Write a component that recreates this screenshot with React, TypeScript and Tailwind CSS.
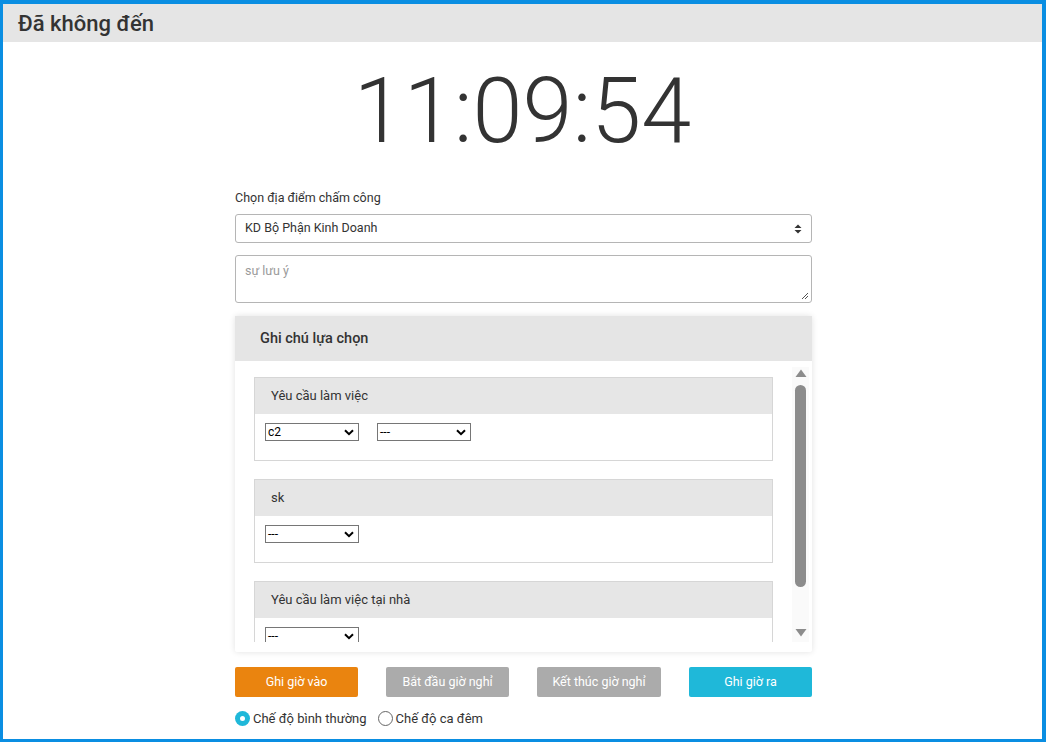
import React from "react";

const font = { fontFamily: "Roboto, 'Noto Sans', sans-serif" };

function Chevron() {
  return (
    <svg width="10" height="7" viewBox="0 0 10 7" className="shrink-0">
      <path d="M1 1.2 L5 5.2 L9 1.2" fill="none" stroke="#000" strokeWidth="2" />
    </svg>
  );
}

function MiniSelect({ value }: { value: string }) {
  return (
    <div className="flex h-[18px] w-[94px] items-center justify-between border border-[#767676] bg-white pl-[2px] pr-[4px] text-[12px] leading-none text-black">
      <span>{value}</span>
      <Chevron />
    </div>
  );
}

function Card({ title, children, cut }: { title: string; children: React.ReactNode; cut?: boolean }) {
  return (
    <div className={`border border-[#d6d6d6] ${cut ? "border-b-0" : ""}`}>
      <div className="flex h-[36px] items-center bg-[#e6e6e6] pl-[16px] text-[13px] text-[#333]">{title}</div>
      <div className={`flex gap-[18px] px-[10px] pt-[9px] ${cut ? "h-[24px]" : "h-[46px]"} overflow-hidden`}>{children}</div>
    </div>
  );
}

export default function App() {
  return (
    <div
      className="h-[742px] w-[1046px] overflow-hidden border-l-[3px] border-t-[4px] border-r-[4px] border-b-[3px] border-[#0a8ee2] bg-white"
      style={font}
    >
      <div className="flex h-[38px] items-center bg-[#e5e5e5] pl-[15px] text-[22px] font-medium text-[#333]">
        Đã không đến
      </div>
      <div className="flex justify-center pt-[27px]">
        <div className="text-[90px] font-light leading-[86px] text-[#333]">11:09:54</div>
      </div>
      <div className="ml-[232px] mt-[35px] w-[577px]">
        <div className="text-[12.5px] leading-[15px] text-[#333]">Chọn địa điểm chấm công</div>
        <div className="mt-[9px] flex h-[29px] items-center justify-between rounded-[3px] border border-[#b5b5b5] px-[9px] text-[12.5px] text-[#333]">
          <span>KD Bộ Phận Kinh Doanh</span>
          <svg width="8" height="10" viewBox="0 0 8 10">
            <path d="M4 0.5 L7.5 4 L0.5 4 Z" fill="#333" />
            <path d="M4 9.5 L7.5 6 L0.5 6 Z" fill="#333" />
          </svg>
        </div>
        <div className="relative mt-[12px] h-[48px] rounded-[3px] border border-[#b5b5b5] px-[9px] pt-[6px] text-[12.5px] text-[#9a9a9a]">
          sự lưu ý
          <svg className="absolute bottom-[2px] right-[2px]" width="9" height="9" viewBox="0 0 9 9">
            <path d="M8 2 L2 8 M8 5 L5 8" stroke="#555" strokeWidth="1" />
          </svg>
        </div>
        <div className="mt-[13px] rounded-[2px] shadow-[0_0_6px_rgba(0,0,0,0.12)]">
          <div className="flex h-[45px] items-center bg-[#e5e5e5] pl-[25px] text-[14.5px] font-medium text-[#333]">
            Ghi chú lựa chọn
          </div>
          <div className="pb-[10px]">
            <div className="flex h-[281px] overflow-hidden pl-[19px] pt-[16px]">
              <div className="flex w-[519px] flex-col gap-[18px]">
                <Card title="Yêu cầu làm việc">
                  <MiniSelect value="c2" />
                  <MiniSelect value="---" />
                </Card>
                <Card title="sk">
                  <MiniSelect value="---" />
                </Card>
                <Card title="Yêu cầu làm việc tại nhà" cut>
                  <MiniSelect value="---" />
                </Card>
              </div>
              <div className="ml-[19px] -mt-[10px] flex w-[17px] flex-col items-center bg-[#fafafa] pt-[2px]">
                <svg width="12" height="9" viewBox="0 0 12 9">
                  <path d="M6 0.5 L11.5 8 L0.5 8 Z" fill="#8c8c8c" />
                </svg>
                <div className="mt-[7px] h-[202px] w-[11px] rounded-full bg-[#8c8c8c]" />
                <div className="flex-1" />
                <svg width="12" height="9" viewBox="0 0 12 9" className="mb-[5px]">
                  <path d="M6 8.5 L11.5 1 L0.5 1 Z" fill="#8c8c8c" />
                </svg>
              </div>
            </div>
          </div>
        </div>
        <div className="mt-[15px] flex justify-between text-[12.5px] text-white">
          <div className="flex h-[30px] w-[123px] items-center justify-center rounded-[2px] bg-[#ea840f]">Ghi giờ vào</div>
          <div className="flex h-[30px] w-[123px] items-center justify-center rounded-[2px] bg-[#ababab]">Bắt đầu giờ nghỉ</div>
          <div className="flex h-[30px] w-[124px] items-center justify-center rounded-[2px] bg-[#ababab]">Kết thúc giờ nghỉ</div>
          <div className="flex h-[30px] w-[123px] items-center justify-center rounded-[2px] bg-[#1fb8d9]">Ghi giờ ra</div>
        </div>
        <div className="mt-[12px] flex items-center text-[13px] text-[#333]">
          <div className="flex h-[15px] w-[15px] items-center justify-center rounded-full bg-[#1fb8d9]">
            <div className="h-[5px] w-[5px] rounded-full bg-white" />
          </div>
          <span className="ml-[3px]">Chế độ bình thường</span>
          <div className="ml-[11px] h-[15px] w-[15px] rounded-full border border-[#666]" />
          <span className="ml-[3px]">Chế độ ca đêm</span>
        </div>
      </div>
    </div>
  );
}
